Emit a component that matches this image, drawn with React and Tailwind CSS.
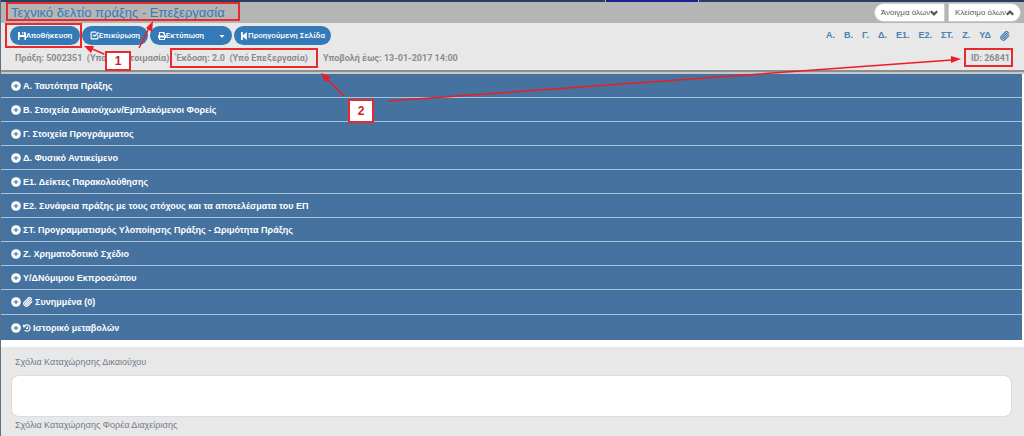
import React from 'react';
import { FaPrint, FaCaretDown } from 'react-icons/fa';
import { FiCheckSquare, FiPaperclip } from 'react-icons/fi';

const sections = [
    { title: 'Α. Ταυτότητα Πράξης' },
    { title: 'Β. Στοιχεία Δικαιούχων/Εμπλεκόμενοι Φορείς' },
    { title: 'Γ. Στοιχεία Προγράμματος' },
    { title: 'Δ. Φυσικό Αντικείμενο' },
    { title: 'Ε1. Δείκτες Παρακολούθησης' },
    { title: 'Ε2. Συνάφεια πράξης με τους στόχους και τα αποτελέσματα του ΕΠ' },
    { title: 'ΣΤ. Προγραμματισμός Υλοποίησης Πράξης - Ωριμότητα Πράξης' },
    { title: 'Ζ. Χρηματοδοτικό Σχέδιο' },
    { title: 'Υ/ΔΝόμιμου Εκπροσώπου' },
    { title: 'Συνημμένα (0)', icon: <FiPaperclip className="size-[10px] stroke-3" /> },
    { title: 'Ιστορικό μεταβολών', icon: <HistoryIcon /> },
];

const links = ['Α.', 'Β.', 'Γ.', 'Δ.', 'Ε1.', 'Ε2.', 'ΣΤ.', 'Ζ.', 'ΥΔ'];

function PlusIcon() {
    return (
        <svg className="mr-[2px] size-[10px] shrink-0" viewBox="0 0 10 10">
            <circle cx="5" cy="5" r="4.8" fill="#fff" />
            <path d="M2.5 5H7.5M5 3V7" stroke="#45729f" strokeWidth="1.2" />
        </svg>
    );
}

function HistoryIcon() {
    return (
        <svg className="size-2" viewBox="0 0 8 8" fill="none" stroke="currentColor" strokeWidth="1.2">
            <path d="M1.2 2.2A3.2 3.2 0 1 1 1.6 6.2M4.4 2.4V4.4H3" />
            <path d="M0 0.2V3.2H3Z" fill="currentColor" stroke="none" />
        </svg>
    );
}

function SaveIcon() {
    return (
        <svg className="size-2 shrink-0" viewBox="0 0 8 8" fill="currentColor">
            <path fillRule="evenodd" d="M0 0H2V3H6V0H7L8 1V8H6.5V5H1.5V8H0ZM4.2 0H5.3V2.3H4.2Z" />
        </svg>
    );
}

function StepBackIcon() {
    return (
        <svg className="size-2 shrink-0" viewBox="0 0 8 8" fill="currentColor">
            <path d="M1 0H2.8V3.3L6.8 0V8L2.8 4.7V8H1Z" />
        </svg>
    );
}

function Chevron({ up }) {
    return (
        <svg className="size-2 shrink-0" viewBox="0 0 8 8" fill="none" stroke="currentColor" strokeWidth="2.2">
            <path d={up ? 'M0.8 5.8L4 2.6L7.2 5.8' : 'M0.8 2.2L4 5.4L7.2 2.2'} />
        </svg>
    );
}

function PillButton({ icon, children, className = '', ...props }) {
    return (
        <button className={`flex h-[19px] items-center justify-center rounded-full bg-[#337ab7] font-['Roboto',sans-serif] text-[8px] font-medium whitespace-nowrap text-white ${className}`} {...props}>
            {icon}
            {children}
        </button>
    );
}

function Section({ title, icon }) {
    return (
        <button className={`flex w-full items-center bg-[#45729f] pl-[10px] text-left text-[9px] font-bold text-white ${icon ? 'h-[25px]' : 'h-6'}`}>
            <PlusIcon />
            {icon && <span className="mr-[2px]">{icon}</span>}
            <span className="pt-[2px]">{title}</span>
        </button>
    );
}

function Comment({ id, label }) {
    return (
        <div>
            <label htmlFor={id} className="block pl-1 text-[9px] leading-3 text-[#6f7b8a]">{label}</label>
            <textarea id={id} className="mt-[7px] block h-[42px] w-full resize-none rounded-lg border border-[#dcdcdc] bg-white" />
        </div>
    );
}

// red marks on top of the form
function Callouts() {
    return (
        <div className="pointer-events-none absolute inset-y-0 right-0 -left-px">
            <div className="absolute top-[2px] left-[6px] h-[19px] w-[234px] border-2 border-[#e8292e]" />
            <div className="absolute top-[23px] left-[5px] h-[25px] w-[77px] border-2 border-[#e8292e]" />
            <div className="absolute top-[48px] left-[170px] h-5 w-[148px] border-2 border-[#e8292e]" />
            <div className="absolute top-[48px] right-[11px] h-[19px] w-[49px] border-2 border-[#e8292e]" />
            <svg className="absolute top-0 left-0" width="1024" height="130" fill="#ed1c24" stroke="#ed1c24">
                <path d="M104 54L90 48M139 48L149 28M344 96L326 78M388 101L952 60" strokeWidth="1.5" fill="none" />
                <path stroke="none" d="M84 46L94 46L91 53ZM153 21L152 32L146 28ZM321 73L331 77L325 82ZM961 59L951 56L951 63Z" />
            </svg>
            <div className="absolute top-[51px] left-[105px] flex h-5 w-[26px] items-center justify-center border-2 border-[#e8292e] bg-white text-xs font-bold text-[#c81e26]">1</div>
            <div className="absolute top-[99px] left-[348px] flex h-6 w-[26px] items-center justify-center border-2 border-[#e8292e] bg-white text-xs font-bold text-[#c81e26]">2</div>
        </div>
    );
}

export default function App() {
    return (
        <div className="relative h-screen overflow-hidden border-l border-[#5d6f85] bg-white font-['Liberation_Sans',Arial,sans-serif]">
            <div className="flex h-[2px] bg-[#25405c]">
                <div className="ml-[59%] w-[94px] border-x border-[#b5b5b5] bg-[#1c2190]" />
            </div>
            <header className="flex h-[21px] items-center justify-between bg-[#b5b5b5] pr-[3px] pl-[10px]">
                <h1 className="text-[13px] leading-none text-[#337ab7]">Τεχνικό δελτίο πράξης - Επεξεργασία</h1>
                <div className="flex gap-[3px] text-[8px] text-[#555]">
                    <button className="flex h-[19px] w-[71px] items-center justify-center rounded-l-full border border-[#ccc] bg-white">Άνοιγμα όλων<Chevron /></button>
                    <button className="flex h-[19px] w-[73px] items-center justify-center rounded-r-full border border-[#ccc] bg-white">Κλείσιμο όλων<Chevron up /></button>
                </div>
            </header>
            <div className="h-[47px] bg-[#e8e8e8] pr-[14px] pl-[9px]">
                <div className="flex items-center pt-[3px]">
                    <div className="flex gap-[2px]">
                        <PillButton className="w-[70px]" icon={<SaveIcon />}>Αποθήκευση</PillButton>
                        <PillButton className="w-[66px]" icon={<FiCheckSquare className="size-[9px] shrink-0 stroke-3" />}>Επικύρωση</PillButton>
                        <div className="flex">
                            <PillButton className="w-[62px] rounded-r-none" icon={<FaPrint className="size-2 shrink-0" />}>Εκτύπωση</PillButton>
                            <PillButton className="w-5 rounded-l-none" icon={<FaCaretDown className="size-2" />} aria-label="Εκτύπωση" />
                        </div>
                        <PillButton className="w-[97px]" icon={<StepBackIcon />}>Προηγούμενη Σελίδα</PillButton>
                    </div>
                    <nav className="ml-auto flex items-center gap-[9px] text-[9px] font-bold text-[#4a7fb5]">
                        {links.map((link) => <a key={link} href="#">{link}</a>)}
                        <a href="#" aria-label="Συνημμένα"><FiPaperclip className="size-[10px] stroke-3" /></a>
                    </nav>
                </div>
                <div className="flex pt-[5px] pl-[5px] font-['Roboto',sans-serif] text-[9px] leading-4 font-bold whitespace-pre text-[#8c8c8c]">
                    <span className="w-[161px]">Πράξη: 5002351  (Υπό προετοιμασία)</span>
                    <span className="w-[147px]">Έκδοση: 2.0  (Υπό Επεξεργασία)</span>
                    <span>Υποβολή έως: 13-01-2017 14:00</span>
                    <span className="ml-auto">ID: 26841</span>
                </div>
            </div>
            <div className="h-1 border-t-2 border-[#8c8f8c] bg-[#c4c8ca]" />
            <main className="divide-y divide-[#a9c3dc] pr-[2px]">
                {sections.map((section) => <Section key={section.title} {...section} />)}
            </main>
            <div className="mt-[7px] h-screen space-y-[2px] bg-[#e8e8e8] pt-[9px] pr-[12px] pl-[10px]">
                <Comment id="beneficiary" label="Σχόλια Καταχώρησης Δικαιούχου" />
                <Comment id="authority" label="Σχόλια Καταχώρησης Φορέα Διαχείρισης" />
            </div>
            <Callouts />
        </div>
    );
}
